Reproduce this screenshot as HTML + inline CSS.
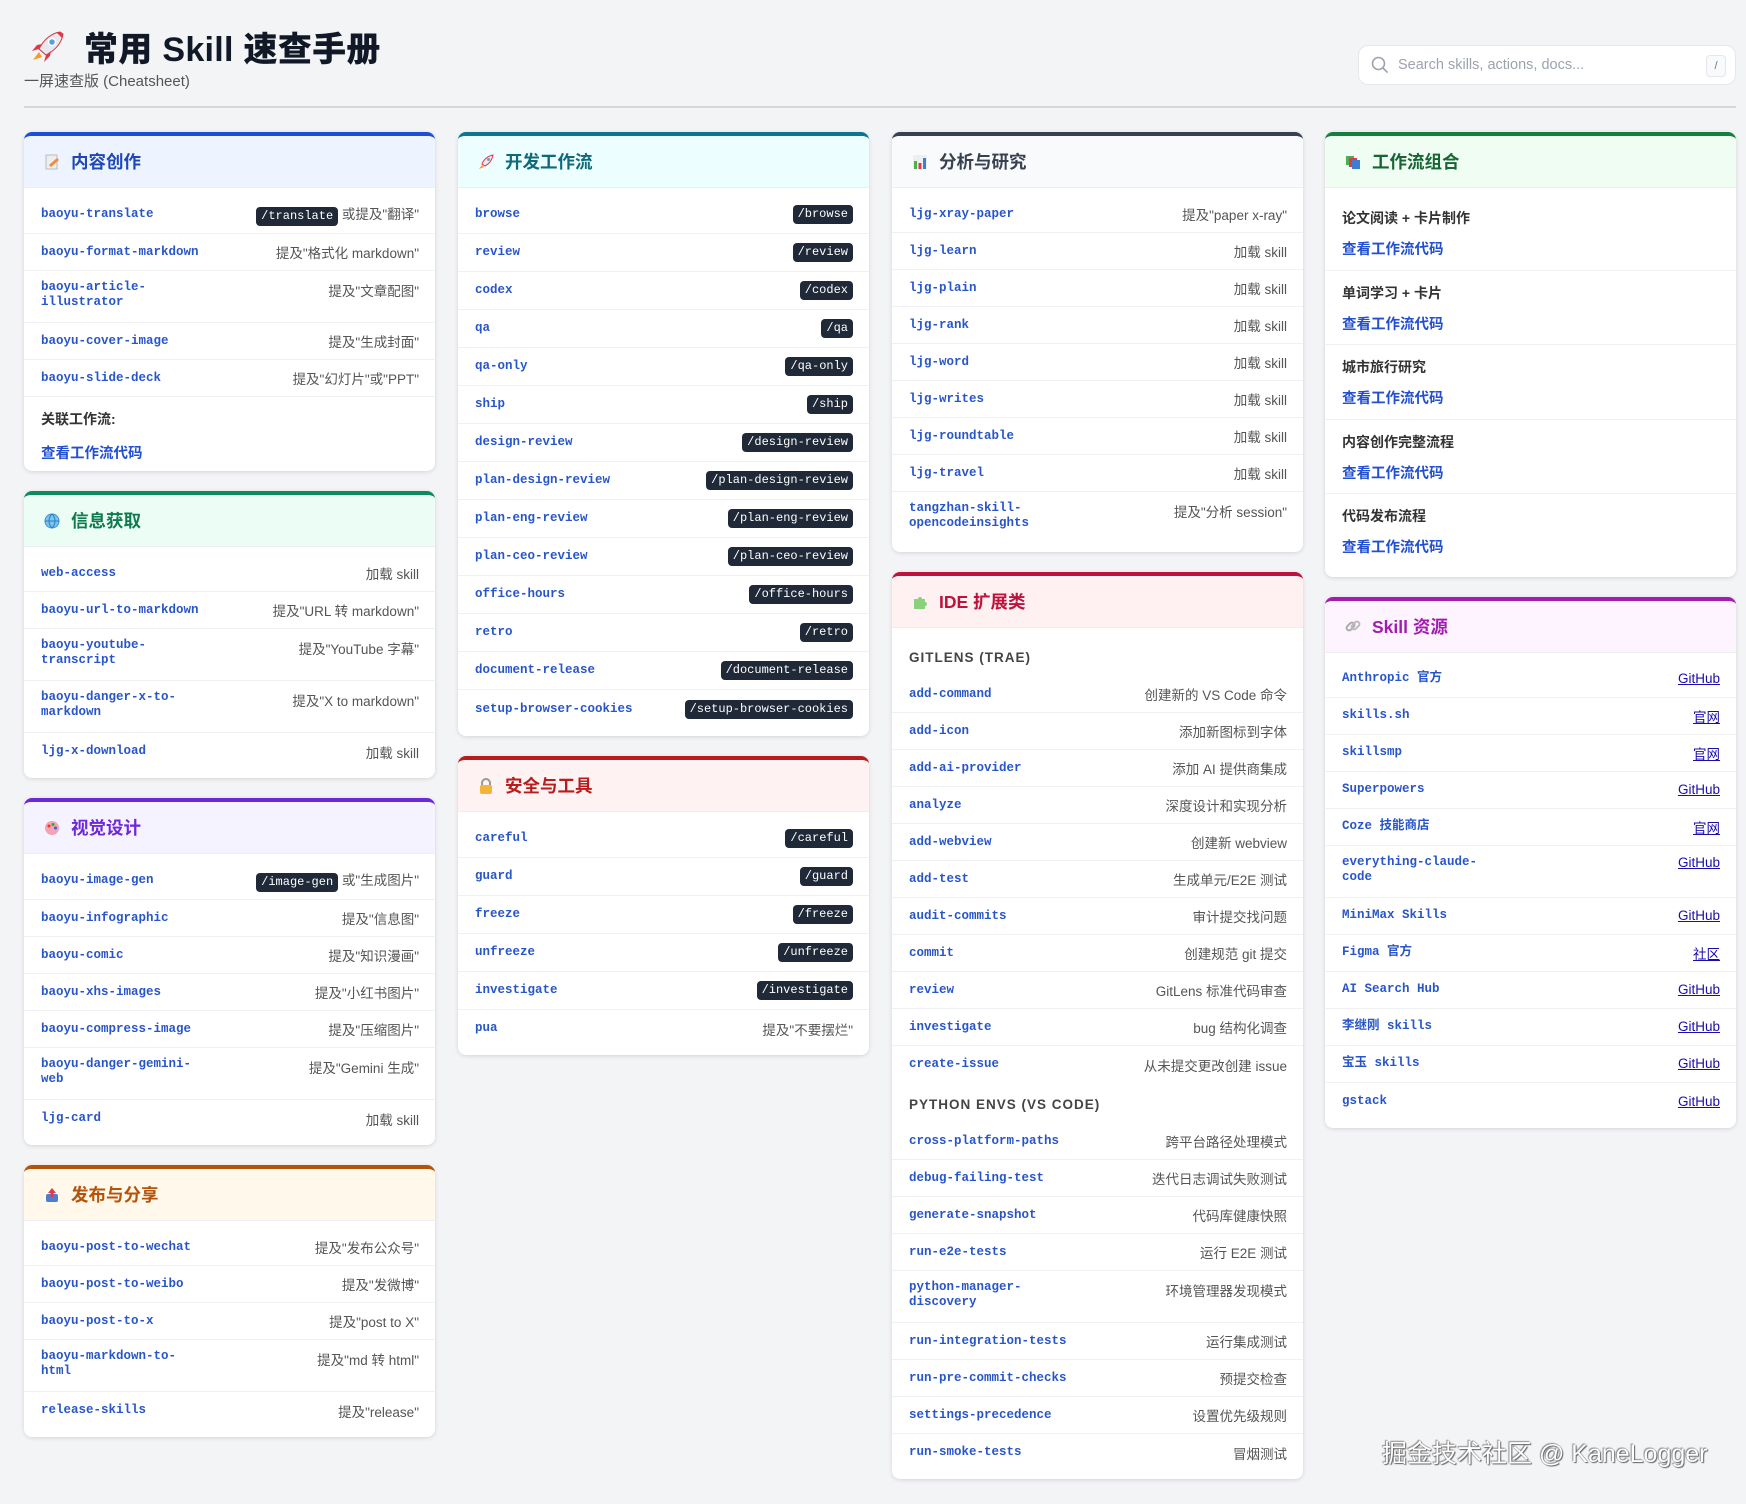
<!DOCTYPE html>
<html><head><meta charset="utf-8">
<style>
*{box-sizing:border-box;margin:0;padding:0}
body{width:1746px;height:1504px;background:#f3f4f6;font-family:"Liberation Sans","Noto Sans CJK SC",sans-serif;position:relative;overflow:hidden;color:#333}
.title{position:absolute;left:28px;top:22px;display:flex;align-items:center}
.title h1{font-size:34px;font-weight:900;color:#111827;margin-left:16px;letter-spacing:0.3px}
.sub{position:absolute;left:24px;top:70px;font-size:15px;color:#555}
.rule{position:absolute;left:24px;top:106px;width:1712px;height:2px;background:#d4d6da}
.search{position:absolute;left:1358px;top:45px;width:378px;height:40px;background:#fff;border:1px solid #e5e7eb;border-radius:10px;display:flex;align-items:center;padding-left:12px}
.search span{font-size:14.5px;color:#9ca3af;margin-left:9px}
.kbd{position:absolute;right:9px;top:9px;width:20px;height:22px;border:1px solid #e5e7eb;border-radius:4px;background:#f9fafb;font-size:11px;color:#6b7280;text-align:center;line-height:20px}
.col{position:absolute;top:132px;width:411px;display:flex;flex-direction:column;gap:20px}
.card{background:#fff;border-radius:8px;box-shadow:0 1px 4px rgba(0,0,0,.13);overflow:hidden;border-top:4px solid}
.hd{height:52px;display:flex;align-items:center;padding-left:19px;border-bottom:1px solid #eceef1}
.hd svg{width:18px;height:18px;margin-right:10px}
.hd b{font-size:17.5px;font-weight:700}
.bd{padding:8px 0}
.r{display:flex;justify-content:space-between;align-items:center;height:37px;padding:0 16px 0 17px;border-bottom:1px solid #f0f1f3}
.r:last-child{border-bottom:none}
.r.b{height:38px}
.r.d{height:52px;align-items:flex-start;padding-top:9px}
.n{font-family:"Liberation Mono","Noto Sans CJK SC",monospace;font-size:12.5px;color:#2856c9;line-height:15px;font-weight:bold}
.t{font-size:13.5px;color:#555;white-space:nowrap}
.k{display:inline-block;background:#1f2937;color:#fff;font-family:"Liberation Mono",monospace;font-size:12px;padding:2px 5px;border-radius:4px;line-height:15px}
a{color:#1a0dab;font-size:13.5px;text-decoration:underline}
.lk{color:#2350d0;font-size:14.5px;font-weight:700;text-decoration:none}
.wf{height:74.6px;padding:12px 17px 0;border-bottom:1px solid #f0f1f3}
.wf:last-child{border-bottom:none}
.wf .h{font-size:14px;font-weight:700;color:#333;height:20px;line-height:20px}
.wf .l{margin-top:12px;height:20px;line-height:20px}
.sec{height:40px;padding:14px 17px 0;font-size:13.5px;font-weight:700;color:#444;letter-spacing:1px}
.wm{position:absolute;left:1382px;top:1434px;font-size:25px;color:#fff;text-shadow:0 0 1px #555,1px 1px 1px #666,-1px -1px 1px #999}
</style></head><body>
<div class="title">
<svg width="40" height="36" viewBox="0 0 40 36"><path d="M32 3 C24 4 16 10 11 20 L18 26 C28 21 34 13 35 5 Z" fill="#e8e8ee" stroke="#c33" stroke-width="1"/><path d="M32 3 L35 5 L34 9 L29 4Z" fill="#e0394f"/><circle cx="24" cy="13" r="3.5" fill="#5aa0e0" stroke="#fff" stroke-width="1.5"/><path d="M11 20 L4 22 L9 16 L14 15Z" fill="#e0394f"/><path d="M18 26 L16 33 L22 27 L23 22Z" fill="#e0394f"/><path d="M11 23 L5 31 L14 28Z" fill="#f59a23"/></svg>
<h1>常用 Skill 速查手册</h1></div>
<div class="sub">一屏速查版 (Cheatsheet)</div>
<div class="search"><svg width="18" height="18" viewBox="0 0 18 18"><circle cx="7.5" cy="7.5" r="6" fill="none" stroke="#9ca3af" stroke-width="1.6"/><path d="M12 12 L16.5 16.5" stroke="#9ca3af" stroke-width="1.6"/></svg><span>Search skills, actions, docs...</span><div class="kbd">/</div></div>
<div class="rule"></div>

<!-- COL 1 -->
<div class="col" style="left:24px">
<div class="card" style="border-color:#1d4ed8">
<div class="hd" style="background:#eef4ff"><svg viewBox="0 0 18 18"><rect x="3" y="2" width="11" height="14" fill="#eee" stroke="#bbb"/><path d="M6 12 L14 5 L16 7 L8 14Z" fill="#f08a3c"/></svg><b style="color:#1e47b8">内容创作</b></div>
<div class="bd">
<div class="r b"><span class="n">baoyu-translate</span><span class="t"><span class="k">/translate</span> 或提及"翻译"</span></div>
<div class="r"><span class="n">baoyu-format-markdown</span><span class="t">提及"格式化 markdown"</span></div>
<div class="r d"><span class="n">baoyu-article-<br>illustrator</span><span class="t">提及"文章配图"</span></div>
<div class="r"><span class="n">baoyu-cover-image</span><span class="t">提及"生成封面"</span></div>
<div class="r"><span class="n">baoyu-slide-deck</span><span class="t">提及"幻灯片"或"PPT"</span></div>
<div style="height:32px;padding:12px 17px 0;font-size:14px;font-weight:700;color:#333">关联工作流:</div>
<div style="height:34px;padding:13px 17px 0"><span class="lk">查看工作流代码</span></div>
</div></div>

<div class="card" style="border-color:#0f8a5f">
<div class="hd" style="background:#ecfdf5"><svg viewBox="0 0 18 18"><circle cx="9" cy="9" r="7" fill="#7cc4f0" stroke="#3a8fd0"/><path d="M2 9 H16 M9 2 C5 6 5 12 9 16 C13 12 13 6 9 2" fill="none" stroke="#2a7fc0"/></svg><b style="color:#0f7a4f">信息获取</b></div>
<div class="bd">
<div class="r"><span class="n">web-access</span><span class="t">加载 skill</span></div>
<div class="r"><span class="n">baoyu-url-to-markdown</span><span class="t">提及"URL 转 markdown"</span></div>
<div class="r d"><span class="n">baoyu-youtube-<br>transcript</span><span class="t">提及"YouTube 字幕"</span></div>
<div class="r d"><span class="n">baoyu-danger-x-to-<br>markdown</span><span class="t">提及"X to markdown"</span></div>
<div class="r"><span class="n">ljg-x-download</span><span class="t">加载 skill</span></div>
</div></div>

<div class="card" style="border-color:#6d28d9">
<div class="hd" style="background:#f5f3ff"><svg viewBox="0 0 18 18"><circle cx="9" cy="9" r="7" fill="#f4a3b4"/><circle cx="6" cy="7" r="1.5" fill="#e33"/><circle cx="10" cy="5.5" r="1.5" fill="#3a3"/><circle cx="12.5" cy="9" r="1.5" fill="#36c"/></svg><b style="color:#6d28d9">视觉设计</b></div>
<div class="bd">
<div class="r b"><span class="n">baoyu-image-gen</span><span class="t"><span class="k">/image-gen</span> 或"生成图片"</span></div>
<div class="r"><span class="n">baoyu-infographic</span><span class="t">提及"信息图"</span></div>
<div class="r"><span class="n">baoyu-comic</span><span class="t">提及"知识漫画"</span></div>
<div class="r"><span class="n">baoyu-xhs-images</span><span class="t">提及"小红书图片"</span></div>
<div class="r"><span class="n">baoyu-compress-image</span><span class="t">提及"压缩图片"</span></div>
<div class="r d"><span class="n">baoyu-danger-gemini-<br>web</span><span class="t">提及"Gemini 生成"</span></div>
<div class="r"><span class="n">ljg-card</span><span class="t">加载 skill</span></div>
</div></div>

<div class="card" style="border-color:#b45309">
<div class="hd" style="background:#fff8eb"><svg viewBox="0 0 18 18"><rect x="3" y="8" width="12" height="8" rx="2" fill="#4a7fd0"/><path d="M9 2 L13 7 H10.5 V11 H7.5 V7 H5Z" fill="#e0394f"/></svg><b style="color:#b45309">发布与分享</b></div>
<div class="bd">
<div class="r"><span class="n">baoyu-post-to-wechat</span><span class="t">提及"发布公众号"</span></div>
<div class="r"><span class="n">baoyu-post-to-weibo</span><span class="t">提及"发微博"</span></div>
<div class="r"><span class="n">baoyu-post-to-x</span><span class="t">提及"post to X"</span></div>
<div class="r d"><span class="n">baoyu-markdown-to-<br>html</span><span class="t">提及"md 转 html"</span></div>
<div class="r"><span class="n">release-skills</span><span class="t">提及"release"</span></div>
</div></div>
</div>

<!-- COL 2 -->
<div class="col" style="left:458px">
<div class="card" style="border-color:#0e7490">
<div class="hd" style="background:#ecfeff"><svg viewBox="0 0 18 18"><path d="M16 2 C11 3 7 6 5 11 L8 13 C12 11 15 7 16 2Z" fill="#eee" stroke="#e0394f"/><circle cx="11.5" cy="6.5" r="1.5" fill="#5aa0e0"/><path d="M5 12 L2 16 L7 14Z" fill="#f59a23"/></svg><b style="color:#0e6a7a">开发工作流</b></div>
<div class="bd">
<div class="r b"><span class="n">browse</span><span class="k">/browse</span></div>
<div class="r b"><span class="n">review</span><span class="k">/review</span></div>
<div class="r b"><span class="n">codex</span><span class="k">/codex</span></div>
<div class="r b"><span class="n">qa</span><span class="k">/qa</span></div>
<div class="r b"><span class="n">qa-only</span><span class="k">/qa-only</span></div>
<div class="r b"><span class="n">ship</span><span class="k">/ship</span></div>
<div class="r b"><span class="n">design-review</span><span class="k">/design-review</span></div>
<div class="r b"><span class="n">plan-design-review</span><span class="k">/plan-design-review</span></div>
<div class="r b"><span class="n">plan-eng-review</span><span class="k">/plan-eng-review</span></div>
<div class="r b"><span class="n">plan-ceo-review</span><span class="k">/plan-ceo-review</span></div>
<div class="r b"><span class="n">office-hours</span><span class="k">/office-hours</span></div>
<div class="r b"><span class="n">retro</span><span class="k">/retro</span></div>
<div class="r b"><span class="n">document-release</span><span class="k">/document-release</span></div>
<div class="r b"><span class="n">setup-browser-cookies</span><span class="k">/setup-browser-cookies</span></div>
</div></div>

<div class="card" style="border-color:#b91c1c">
<div class="hd" style="background:#fef2f2"><svg viewBox="0 0 18 18"><path d="M5 8 V6 A4 4 0 0 1 13 6 V8" fill="none" stroke="#999" stroke-width="2"/><rect x="3" y="8" width="12" height="9" rx="2" fill="#f2b53a"/></svg><b style="color:#b91c1c">安全与工具</b></div>
<div class="bd">
<div class="r b"><span class="n">careful</span><span class="k">/careful</span></div>
<div class="r b"><span class="n">guard</span><span class="k">/guard</span></div>
<div class="r b"><span class="n">freeze</span><span class="k">/freeze</span></div>
<div class="r b"><span class="n">unfreeze</span><span class="k">/unfreeze</span></div>
<div class="r b"><span class="n">investigate</span><span class="k">/investigate</span></div>
<div class="r"><span class="n">pua</span><span class="t">提及"不要摆烂"</span></div>
</div></div>
</div>

<!-- COL 3 -->
<div class="col" style="left:892px">
<div class="card" style="border-color:#374151">
<div class="hd" style="background:#f8fafc"><svg viewBox="0 0 18 18"><rect x="2" y="2" width="14" height="14" fill="#eee"/><rect x="3" y="8" width="3" height="8" fill="#4caf50"/><rect x="7.5" y="10" width="3" height="6" fill="#e0394f"/><rect x="12" y="5" width="3" height="11" fill="#3a7fd0"/></svg><b style="color:#374151">分析与研究</b></div>
<div class="bd">
<div class="r"><span class="n">ljg-xray-paper</span><span class="t">提及"paper x-ray"</span></div>
<div class="r"><span class="n">ljg-learn</span><span class="t">加载 skill</span></div>
<div class="r"><span class="n">ljg-plain</span><span class="t">加载 skill</span></div>
<div class="r"><span class="n">ljg-rank</span><span class="t">加载 skill</span></div>
<div class="r"><span class="n">ljg-word</span><span class="t">加载 skill</span></div>
<div class="r"><span class="n">ljg-writes</span><span class="t">加载 skill</span></div>
<div class="r"><span class="n">ljg-roundtable</span><span class="t">加载 skill</span></div>
<div class="r"><span class="n">ljg-travel</span><span class="t">加载 skill</span></div>
<div class="r d"><span class="n">tangzhan-skill-<br>opencodeinsights</span><span class="t">提及"分析 session"</span></div>
</div></div>

<div class="card" style="border-color:#be123c">
<div class="hd" style="background:#fff1f2"><svg viewBox="0 0 18 18"><path d="M3 6 H7 A2 2 0 0 1 11 6 H14 V9 A2 2 0 0 1 14 13 V16 H3Z" fill="#8bd17c"/></svg><b style="color:#be123c">IDE 扩展类</b></div>
<div class="bd">
<div class="sec">GITLENS (TRAE)</div>
<div class="r"><span class="n">add-command</span><span class="t">创建新的 VS Code 命令</span></div>
<div class="r"><span class="n">add-icon</span><span class="t">添加新图标到字体</span></div>
<div class="r"><span class="n">add-ai-provider</span><span class="t">添加 AI 提供商集成</span></div>
<div class="r"><span class="n">analyze</span><span class="t">深度设计和实现分析</span></div>
<div class="r"><span class="n">add-webview</span><span class="t">创建新 webview</span></div>
<div class="r"><span class="n">add-test</span><span class="t">生成单元/E2E 测试</span></div>
<div class="r"><span class="n">audit-commits</span><span class="t">审计提交找问题</span></div>
<div class="r"><span class="n">commit</span><span class="t">创建规范 git 提交</span></div>
<div class="r"><span class="n">review</span><span class="t">GitLens 标准代码审查</span></div>
<div class="r"><span class="n">investigate</span><span class="t">bug 结构化调查</span></div>
<div class="r" style="border-bottom:none"><span class="n">create-issue</span><span class="t">从未提交更改创建 issue</span></div>
<div class="sec">PYTHON ENVS (VS CODE)</div>
<div class="r"><span class="n">cross-platform-paths</span><span class="t">跨平台路径处理模式</span></div>
<div class="r"><span class="n">debug-failing-test</span><span class="t">迭代日志调试失败测试</span></div>
<div class="r"><span class="n">generate-snapshot</span><span class="t">代码库健康快照</span></div>
<div class="r"><span class="n">run-e2e-tests</span><span class="t">运行 E2E 测试</span></div>
<div class="r d"><span class="n">python-manager-<br>discovery</span><span class="t">环境管理器发现模式</span></div>
<div class="r"><span class="n">run-integration-tests</span><span class="t">运行集成测试</span></div>
<div class="r"><span class="n">run-pre-commit-checks</span><span class="t">预提交检查</span></div>
<div class="r"><span class="n">settings-precedence</span><span class="t">设置优先级规则</span></div>
<div class="r"><span class="n">run-smoke-tests</span><span class="t">冒烟测试</span></div>
</div></div>
</div>

<!-- COL 4 -->
<div class="col" style="left:1325px">
<div class="card" style="border-color:#15803d">
<div class="hd" style="background:#effdf3"><svg viewBox="0 0 18 18"><rect x="2" y="3" width="8" height="9" fill="#4caf50"/><rect x="5" y="5" width="8" height="9" fill="#e0394f"/><rect x="8" y="7" width="8" height="9" fill="#3a7fd0"/></svg><b style="color:#166534">工作流组合</b></div>
<div class="bd">
<div class="wf"><div class="h">论文阅读 + 卡片制作</div><div class="l"><span class="lk">查看工作流代码</span></div></div>
<div class="wf"><div class="h">单词学习 + 卡片</div><div class="l"><span class="lk">查看工作流代码</span></div></div>
<div class="wf"><div class="h">城市旅行研究</div><div class="l"><span class="lk">查看工作流代码</span></div></div>
<div class="wf"><div class="h">内容创作完整流程</div><div class="l"><span class="lk">查看工作流代码</span></div></div>
<div class="wf"><div class="h">代码发布流程</div><div class="l"><span class="lk">查看工作流代码</span></div></div>
</div></div>

<div class="card" style="border-color:#a21caf">
<div class="hd" style="background:#fdf4ff"><svg viewBox="0 0 18 18"><rect x="2" y="7" width="9" height="5" rx="2.5" transform="rotate(-45 6.5 9.5)" fill="none" stroke="#aaa" stroke-width="2"/><rect x="7" y="6" width="9" height="5" rx="2.5" transform="rotate(-45 11.5 8.5)" fill="none" stroke="#bbb" stroke-width="2"/></svg><b style="color:#a21caf">Skill 资源</b></div>
<div class="bd">
<div class="r"><span class="n">Anthropic 官方</span><a>GitHub</a></div>
<div class="r"><span class="n">skills.sh</span><a>官网</a></div>
<div class="r"><span class="n">skillsmp</span><a>官网</a></div>
<div class="r"><span class="n">Superpowers</span><a>GitHub</a></div>
<div class="r"><span class="n">Coze 技能商店</span><a>官网</a></div>
<div class="r d"><span class="n">everything-claude-<br>code</span><a>GitHub</a></div>
<div class="r"><span class="n">MiniMax Skills</span><a>GitHub</a></div>
<div class="r"><span class="n">Figma 官方</span><a>社区</a></div>
<div class="r"><span class="n">AI Search Hub</span><a>GitHub</a></div>
<div class="r"><span class="n">李继刚 skills</span><a>GitHub</a></div>
<div class="r"><span class="n">宝玉 skills</span><a>GitHub</a></div>
<div class="r"><span class="n">gstack</span><a>GitHub</a></div>
</div></div>
</div>

<div class="wm">掘金技术社区 @ KaneLogger</div>
</body></html>
